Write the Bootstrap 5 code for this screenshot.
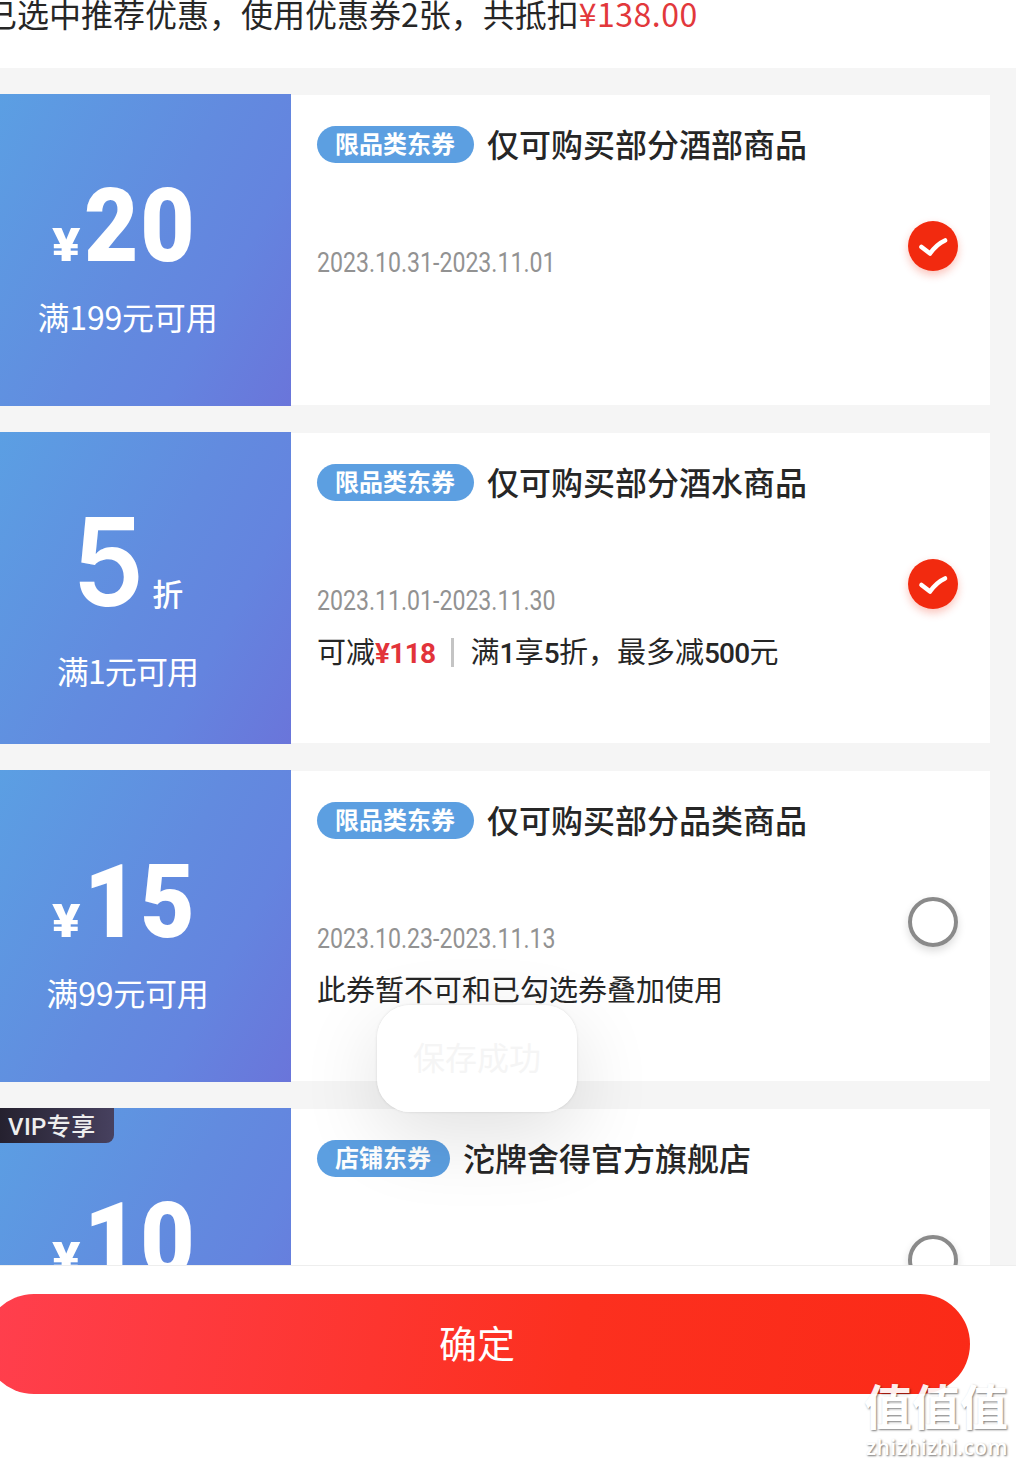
<!DOCTYPE html>
<html lang="zh-CN">
<head>
    <meta charset="UTF-8">
    <meta name="viewport" content="width=device-width, initial-scale=1.0">
    <title>优惠券</title>
    <link href="https://cdn.jsdelivr.net/npm/bootstrap@5.3.0/dist/css/bootstrap.min.css" rel="stylesheet">
    <style>
        body {
            font-family: "Noto Sans CJK SC", sans-serif;
            color: #262626;
            height: 1465px;
            overflow: hidden;
        }
        .summary {
            height: 68px;
            font-size: 32px;
            line-height: 27px;
            margin-left: -15px;
        }
        .summary-price { color: #e2383b; letter-spacing: .5px; }
        .coupon-list {
            height: 1197px;
            background: #f5f5f5;
            padding: 26px 26px 0 0;
            gap: 26px;
        }
        .coupon { height: 312px; }
        .coupon-side {
            width: 291px;
            padding: 92px 36px 0 0;
            background: linear-gradient(118deg, #5b9fe3 0%, #628bdf 50%, #6484df 72%, #6a75da 100%);
        }
        .coupon-main {
            height: 310px;
            padding: 31px 32px 0 26px;
        }
        .amount {
            height: 80px;
            line-height: 80px;
            font-family: Roboto, sans-serif;
            font-weight: 900;
            margin-right: 8px;
        }
        .amount-yen {
            font-size: 47px;
            margin-right: 3px;
            transform: scaleX(1.12);
            transform-origin: 100% 0;
        }
        .amount-num {
            font-size: 102px;
            letter-spacing: 2px;
            margin-right: -14px;
            transform: scaleX(.92);
            transform-origin: 0 0;
        }
        .coupon-side.discount { padding-top: 85px; }
        .discount .amount { height: 90px; line-height: 90px; margin-right: 0; }
        .discount .amount-num {
            font-family: Inter, sans-serif;
            font-weight: 600;
            font-size: 122px;
            letter-spacing: 0;
            margin-right: 4px;
            transform: scaleX(.94);
        }
        .amount-unit {
            font: 500 31px/40px "Noto Sans CJK SC", sans-serif;
        }
        .condition {
            font-size: 32px;
            line-height: 40px;
            margin-top: 30px;
            letter-spacing: -.2px;
        }
        .discount .condition { margin-top: 43px; letter-spacing: -.9px; }
        .tag {
            height: 37px;
            padding: 0 19px 0 18px;
            font-size: 24px;
            font-weight: 700;
            line-height: 34px;
            background: #5c9fe1;
        }
        .coupon-title {
            font-size: 32px;
            font-weight: 500;
            line-height: 35px;
            margin-left: 13px;
        }
        .date {
            font: 400 28px/32px Roboto, sans-serif;
            color: #929292;
            margin-top: 84px;
            transform: scaleX(.825);
            transform-origin: 0 0;
        }
        .note {
            font-size: 29px;
            line-height: 36px;
            margin-top: 15px;
        }
        .note b {
            font-family: Roboto, sans-serif;
            font-weight: 500;
            font-size: 28px;
            letter-spacing: -.7px;
        }
        .note b.save { color: #e2333a; font-weight: 700; }
        .divider {
            width: 3px;
            height: 29px;
            margin: 0 16px;
            background: #c4c4c4;
        }
        .pick {
            width: 50px;
            height: 50px;
            margin-bottom: 40px;
            border: 4px solid #8a8a8a;
            box-shadow: 0 4px 8px rgba(0, 0, 0, .14);
        }
        .pick.on {
            border: 0;
            background: #f22a0f;
            box-shadow: 0 4px 8px rgba(242, 42, 15, .28);
        }
        .vip {
            height: 35px;
            width: 114px;
            padding: 3px 0 0 8px;
            font: 500 24px/32px Roboto, "Noto Sans CJK SC", sans-serif;
            letter-spacing: .4px;
            color: #eee;
            border-radius: 0 0 8px 0;
            background: linear-gradient(90deg, #25212f, #47415f);
        }
        .footer-bar {
            height: 200px;
            padding-top: 28px;
            border-top: 1px solid #eee;
        }
        .confirm {
            width: 986px;
            height: 100px;
            margin-left: -16px;
            padding-bottom: 5px;
            font-size: 38px;
            line-height: 80px;
            background: linear-gradient(100deg, #ff3f4e, #fc301f 60%, #fb2a17);
        }
        .save-toast {
            left: 377px;
            top: 1005px;
            width: 200px;
            height: 107px;
            border-radius: 33px;
            background: rgba(255, 255, 255, .98);
            box-shadow: 0 0 3px rgba(0, 0, 0, .12), 0 24px 80px rgba(0, 0, 0, .12);
            color: #f5f5f5;
            font-size: 32px;
            line-height: 102px;
        }
        .watermark {
            right: 8px;
            bottom: 5px;
            width: 144px;
            color: #fff;
            text-shadow: 1px 1px 2px rgba(0, 0, 0, .55);
        }
        .watermark-name {
            font-size: 48px;
            font-weight: 700;
            line-height: 60px;
            opacity: .92;
        }
        .watermark-url {
            font: 600 21px/26px "Open Sans", sans-serif;
            letter-spacing: .4px;
            text-align: right;
        }
    </style>
</head>
<body class="bg-white position-relative">
    <!-- Summary -->
    <div class="summary text-nowrap">已选中推荐优惠，使用优惠券2张，共抵扣<span class="summary-price">¥138.00</span></div>

    <!-- Coupons -->
    <div class="coupon-list d-flex flex-column overflow-hidden">
        <div class="coupon d-flex align-items-center flex-shrink-0">
            <div class="coupon-side h-100 text-white text-center">
                <div class="amount d-flex justify-content-center align-items-baseline"><span class="amount-yen">¥</span><span class="amount-num">20</span></div>
                <div class="condition">满199元可用</div>
            </div>
            <div class="coupon-main flex-grow-1 d-flex bg-white">
                <div class="flex-grow-1">
                    <div class="d-flex"><span class="tag rounded-pill text-white">限品类东券</span><span class="coupon-title">仅可购买部分酒部商品</span></div>
                    <div class="date">2023.10.31-2023.11.01</div>
                </div>
                <div class="pick on rounded-circle align-self-center">
                    <svg width="50" height="50" viewBox="0 0 50 50" fill="none" stroke="#fff" stroke-width="4.6" stroke-linecap="round" stroke-linejoin="round"><path d="M13.500 26L22 32.500Q29 23 37 19.500"/></svg>
                </div>
            </div>
        </div>

        <div class="coupon d-flex align-items-center flex-shrink-0">
            <div class="coupon-side discount h-100 text-white text-center">
                <div class="amount d-flex justify-content-center align-items-baseline"><span class="amount-num">5</span><span class="amount-unit">折</span></div>
                <div class="condition">满1元可用</div>
            </div>
            <div class="coupon-main flex-grow-1 d-flex bg-white">
                <div class="flex-grow-1">
                    <div class="d-flex"><span class="tag rounded-pill text-white">限品类东券</span><span class="coupon-title">仅可购买部分酒水商品</span></div>
                    <div class="date">2023.11.01-2023.11.30</div>
                    <div class="note d-flex align-items-center text-nowrap"><span>可减<b class="save">¥118</b></span><span class="divider"></span><span>满<b>1</b>享<b>5</b>折，最多减<b>500</b>元</span></div>
                </div>
                <div class="pick on rounded-circle align-self-center">
                    <svg width="50" height="50" viewBox="0 0 50 50" fill="none" stroke="#fff" stroke-width="4.6" stroke-linecap="round" stroke-linejoin="round"><path d="M13.500 26L22 32.500Q29 23 37 19.500"/></svg>
                </div>
            </div>
        </div>

        <div class="coupon d-flex align-items-center flex-shrink-0">
            <div class="coupon-side h-100 text-white text-center">
                <div class="amount d-flex justify-content-center align-items-baseline"><span class="amount-yen">¥</span><span class="amount-num">15</span></div>
                <div class="condition">满99元可用</div>
            </div>
            <div class="coupon-main flex-grow-1 d-flex bg-white">
                <div class="flex-grow-1">
                    <div class="d-flex"><span class="tag rounded-pill text-white">限品类东券</span><span class="coupon-title">仅可购买部分品类商品</span></div>
                    <div class="date">2023.10.23-2023.11.13</div>
                    <div class="note text-nowrap">此券暂不可和已勾选券叠加使用</div>
                </div>
                <div class="pick rounded-circle align-self-center"></div>
            </div>
        </div>

        <div class="coupon d-flex align-items-center flex-shrink-0">
            <div class="coupon-side h-100 text-white text-center position-relative">
                <div class="vip position-absolute top-0 start-0 text-start">VIP专享</div>
                <div class="amount d-flex justify-content-center align-items-baseline"><span class="amount-yen">¥</span><span class="amount-num">10</span></div>
            </div>
            <div class="coupon-main flex-grow-1 d-flex bg-white">
                <div class="flex-grow-1">
                    <div class="d-flex"><span class="tag rounded-pill text-white">店铺东券</span><span class="coupon-title">沱牌舍得官方旗舰店</span></div>
                </div>
                <div class="pick rounded-circle align-self-center"></div>
            </div>
        </div>
    </div>

    <!-- Confirm -->
    <div class="footer-bar bg-white">
        <button class="confirm d-block border-0 rounded-pill text-white">确定</button>
    </div>

    <div class="save-toast position-absolute text-center">保存成功</div>

    <div class="watermark position-absolute text-nowrap">
        <div class="watermark-name">值值值</div>
        <div class="watermark-url">zhizhizhi.com</div>
    </div>

    <script src="https://cdn.jsdelivr.net/npm/bootstrap@5.3.0/dist/js/bootstrap.bundle.min.js"></script>
</body>
</html>
